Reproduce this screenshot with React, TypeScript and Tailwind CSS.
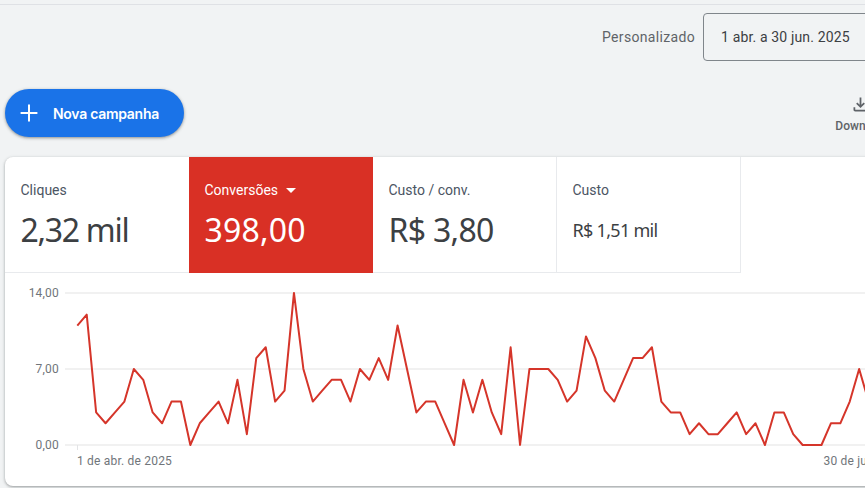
const values = [11,12,3,2,3,4,7,6,3,2,4,4,0,2,3,4,2,6,1,8,9,4,5,14,7,4,5,6,6,4,7,6,8,6,11,7,3,4,4,2,0,6,3,6,3,1,9,0,7,7,7,6,4,5,10,8,5,4,6,8,8,9,4,3,3,1,2,1,1,2,3,1,2,0,3,3,1,0,0,0,2,2,4,7,4];

const points = values
  .map((v, i) => `${(77.3 + i * 9.42).toFixed(2)},${(445 - v * 10.86).toFixed(2)}`)
  .join(" ");

function Tab({ label, value, valueClass, active, arrow, border }: { label: string; value: string; valueClass: string; active?: boolean; arrow?: boolean; border?: boolean }) {
  return (
    <div className={`w-[184px] h-[116px] shrink-0 pl-[15.5px] pt-[25px] ${active ? "bg-[#d93025] text-white" : "text-[#3c4043] border-b border-[#e8eaed]"} ${border ? "border-r" : ""}`}>
      <div className={`flex items-center h-4 text-[14px] leading-4 ${active ? "text-white" : "text-[#4b5563]"}`}>
        {label}
        {arrow && <span className="ml-[8px] mt-[1px] w-0 h-0 border-x-[5px] border-x-transparent border-t-[5px] border-t-white" />}
      </div>
      <div className={`flex items-center h-10 mt-[12px] font-['Noto_Sans',sans-serif] ${valueClass}`}>{value}</div>
    </div>
  );
}

export default function App() {
  return (
    <div className="w-[865px] h-[488px] overflow-hidden bg-[#f1f3f4] font-['Roboto',sans-serif]">
      <div className="h-[5px] border-b border-[#dfe1e5]" />
      <div className="flex items-center h-[48px] mt-[8px] ml-[602px] w-[500px]">
        <span className="text-[14px] text-[#5f6368] tracking-[0.33px]">Personalizado</span>
        <div className="ml-[8px] flex items-center w-[260px] h-[48px] pl-[17px] border border-[#80868b] rounded-[4px] text-[14px] text-[#3c4043] tracking-[0.15px]">
          1 abr. a 30 jun. 2025
        </div>
      </div>
      <div className="flex items-start h-[48px] mt-[28px] ml-[5px] w-[900px]">
        <button className="flex items-center shrink-0 w-[179px] h-[48px] rounded-full bg-[#1a73e8] text-white shadow-[0_1px_3px_1px_rgba(60,64,67,0.2),0_1px_2px_rgba(60,64,67,0.3)]">
          <svg width="24" height="24" viewBox="0 0 24 24" className="ml-[12px] shrink-0" fill="none" stroke="white" strokeWidth="2">
            <path d="M3.6 12h16.8M12 3.6v16.8" />
          </svg>
          <span className="ml-[12px] text-[14px] font-semibold font-['Inter',sans-serif] tracking-[-0.28px]">Nova campanha</span>
        </button>
        <div className="flex flex-col items-center shrink-0 w-[62px] ml-[647px] mt-[3px] text-[#5f6368]">
          <svg width="21" height="21" viewBox="0 0 24 24" fill="#5f6368" className="mt-[1.5px] mr-[2.5px]">
            <path d="M18 15v3H6v-3H4v3c0 1.1.9 2 2 2h12c1.1 0 2-.9 2-2v-3h-2zm-1-4l-1.41-1.41L13 12.17V4h-2v8.17L8.41 9.59 7 11l5 5 5-5z" />
          </svg>
          <span className="text-[12px] leading-4 font-medium mt-[3px]">Download</span>
        </div>
      </div>
      <div className="mt-[20px] ml-[5px] w-[900px] h-[329px] bg-white rounded-[8px] shadow-[0_1px_2px_rgba(60,64,67,0.3),0_1px_3px_1px_rgba(60,64,67,0.15)] overflow-hidden">
        <div className="flex h-[116px]">
          <Tab label="Cliques" value="2,32 mil" valueClass="text-[32px] tracking-[-1.3px]" />
          <Tab label="Conversões" value="398,00" valueClass="text-[32px] tracking-[0.2px]" active arrow />
          <Tab label="Custo / conv." value="R$ 3,80" valueClass="text-[32px] tracking-[-0.7px]" border />
          <Tab label="Custo" value="R$ 1,51 mil" valueClass="text-[18px] tracking-[-0.7px]" border />
        </div>
        <svg width="900" height="213" viewBox="5 273 900 213" className="block">
          <g stroke="#eceded" strokeWidth="1.5">
            <line x1="65" y1="293" x2="905" y2="293" />
            <line x1="65" y1="369" x2="905" y2="369" />
            <line x1="65" y1="445" x2="905" y2="445" />
          </g>
          <line x1="77.5" y1="445" x2="77.5" y2="450" stroke="#e3e4e6" />
          <polyline points={points} fill="none" stroke="#d5352a" strokeWidth="2" strokeLinejoin="round" />
          <g fill="#70757a" fontSize="12" fontFamily="Roboto, sans-serif" letterSpacing="0.2">
            <text x="59" y="297" textAnchor="end">14,00</text>
            <text x="59" y="373" textAnchor="end">7,00</text>
            <text x="59" y="449" textAnchor="end">0,00</text>
            <text x="77" y="465">1 de abr. de 2025</text>
            <text x="823.5" y="465">30 de jun. de 2025</text>
          </g>
        </svg>
      </div>
    </div>
  );
}
